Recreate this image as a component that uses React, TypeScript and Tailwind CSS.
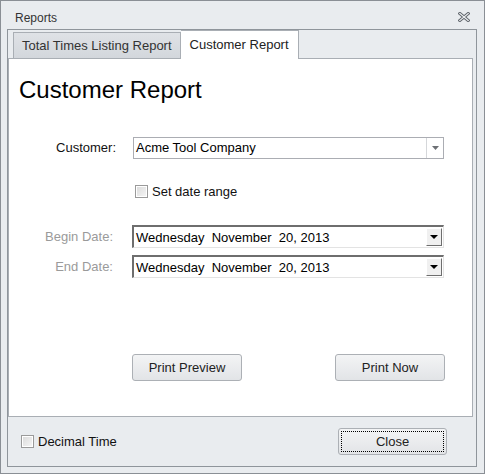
// @ts-nocheck
import React from 'react'

const FONT = { fontFamily: '"Liberation Sans", Arial, sans-serif' }

function CloseGlyph() {
  return (
    <svg width="12" height="10" viewBox="0 0 12 10">
      <path d="M1.8 1.5 L10.2 8.5 M10.2 1.5 L1.8 8.5" stroke="#5f646b" strokeWidth="3" strokeLinecap="square" fill="none" />
      <path d="M1.8 1.5 L10.2 8.5 M10.2 1.5 L1.8 8.5" stroke="#eef0f2" strokeWidth="1.2" strokeLinecap="square" fill="none" />
    </svg>
  )
}

function CheckBox({ label, className = '' }: { label: string; className?: string }) {
  return (
    <label className={`flex items-center gap-[4px] ${className}`}>
      <span className="w-[13px] h-[13px] border border-[#9a9a9a] bg-white p-[1px] flex">
        <span className="flex-1 bg-gradient-to-br from-[#dcdcdc] to-[#f4f4f4]" />
      </span>
      <span className="text-[13px] text-[#111] leading-none">{label}</span>
    </label>
  )
}

function ComboBox({ value }: { value: string }) {
  return (
    <div className="w-[311px] h-[22px] border border-[#abadb3] bg-white flex">
      <div className="flex-1 pl-[2px] text-[13px] text-black leading-[20px]">{value}</div>
      <div className="w-[17px] border-l border-[#d5d7da] flex items-center justify-center">
        <svg width="7" height="4" viewBox="0 0 7 4"><path d="M0 0 H7 L3.5 4 Z" fill="#6d7075" /></svg>
      </div>
    </div>
  )
}

function DatePicker({ value }: { value: string }) {
  return (
    <div className="w-[312px] h-[23px] border-t-2 border-l-2 border-t-[#6e6e6e] border-l-[#6e6e6e] border-b border-r border-b-[#e3e3e3] border-r-[#e3e3e3] bg-white flex items-center">
      <div className="flex-1 pl-[2px] text-[13px] text-black whitespace-pre leading-none">{value}</div>
      <div className="w-[16px] h-[18px] mr-[1px] bg-[#f0f0f0] border-t border-l border-t-white border-l-white border-b border-r border-b-[#6e6e6e] border-r-[#6e6e6e] flex items-center justify-center">
        <svg width="8" height="4" viewBox="0 0 8 4"><path d="M0 0 H8 L4 4 Z" fill="#000" /></svg>
      </div>
    </div>
  )
}

function PushButton({ children, focus = false, className = '' }) {
  return (
    <button className={`h-[27px] rounded-[3px] border border-[#acb0b5] bg-gradient-to-b from-[#f3f4f5] to-[#e2e4e7] text-[13px] text-[#222] p-[2px] ${className}`}>
      <span className={`flex h-full w-full items-center justify-center ${focus ? 'border border-dotted border-black' : ''}`}>{children}</span>
    </button>
  )
}

export default function App() {
  const date = 'Wednesday  November  20, 2013'
  return (
    <div style={FONT} className="w-[485px] h-[474px] border border-[#8a8f95] bg-[#e9ecef] flex flex-col">
      {/* title bar */}
      <div className="h-[28px] flex items-center justify-between pl-[14px] pr-[14px]">
        <span className="text-[12px] text-[#333] pt-[5px]">Reports</span>
        <span className="pt-[4px]"><CloseGlyph /></span>
      </div>

      {/* inner frame */}
      <div className="ml-[6px] w-[470px] h-[438px] border border-[#8f959b] flex flex-col">
        {/* tabs */}
        <div className="h-[28px] flex items-end pl-[5px]">
          <div className="h-[26px] px-[8px] pt-[1px] border border-b-0 border-[#a9aeb4] bg-gradient-to-b from-[#dfe2e6] to-[#d3d7dc] text-[13px] text-[#333] flex items-center">
            Total Times Listing Report
          </div>
          <div className="h-[29px] -mb-[1px] px-[9px] border border-b-0 border-l-0 border-[#a9aeb4] bg-white text-[13px] text-[#222] flex items-center pb-[1px] relative z-10">
            Customer Report
          </div>
        </div>

        {/* tab page */}
        <div className="w-[465px] h-[359px] border border-[#a9aeb4] bg-white flex flex-col">
          <h1 className="mt-[16px] ml-[10px] text-[24px] leading-[30px] text-black">Customer Report</h1>

          <div className="mt-[32px] flex items-center">
            <span className="w-[107px] text-right text-[13px] text-[#111]">Customer:</span>
            <div className="ml-[17px]"><ComboBox value="Acme Tool Company" /></div>
          </div>

          <CheckBox label="Set date range" className="mt-[26px] ml-[126px]" />

          <div className="mt-[27px] flex items-center">
            <span className="w-[104px] text-right text-[13px] text-[#9a9a9a]">Begin Date:</span>
            <div className="ml-[19px]"><DatePicker value={date} /></div>
          </div>
          <div className="mt-[7px] flex items-center">
            <span className="w-[104px] text-right text-[13px] text-[#9a9a9a]">End Date:</span>
            <div className="ml-[19px]"><DatePicker value={date} /></div>
          </div>

          <div className="mt-[76px] flex pl-[123px]">
            <PushButton className="w-[110px]">Print Preview</PushButton>
            <PushButton className="w-[110px] ml-[93px]">Print Now</PushButton>
          </div>
        </div>

        {/* footer */}
        <div className="flex-1 flex items-center justify-between pl-[13px] pr-[29px]">
          <CheckBox label="Decimal Time" />
          <PushButton focus className="w-[109px] h-[26px]">Close</PushButton>
        </div>
      </div>
    </div>
  )
}
